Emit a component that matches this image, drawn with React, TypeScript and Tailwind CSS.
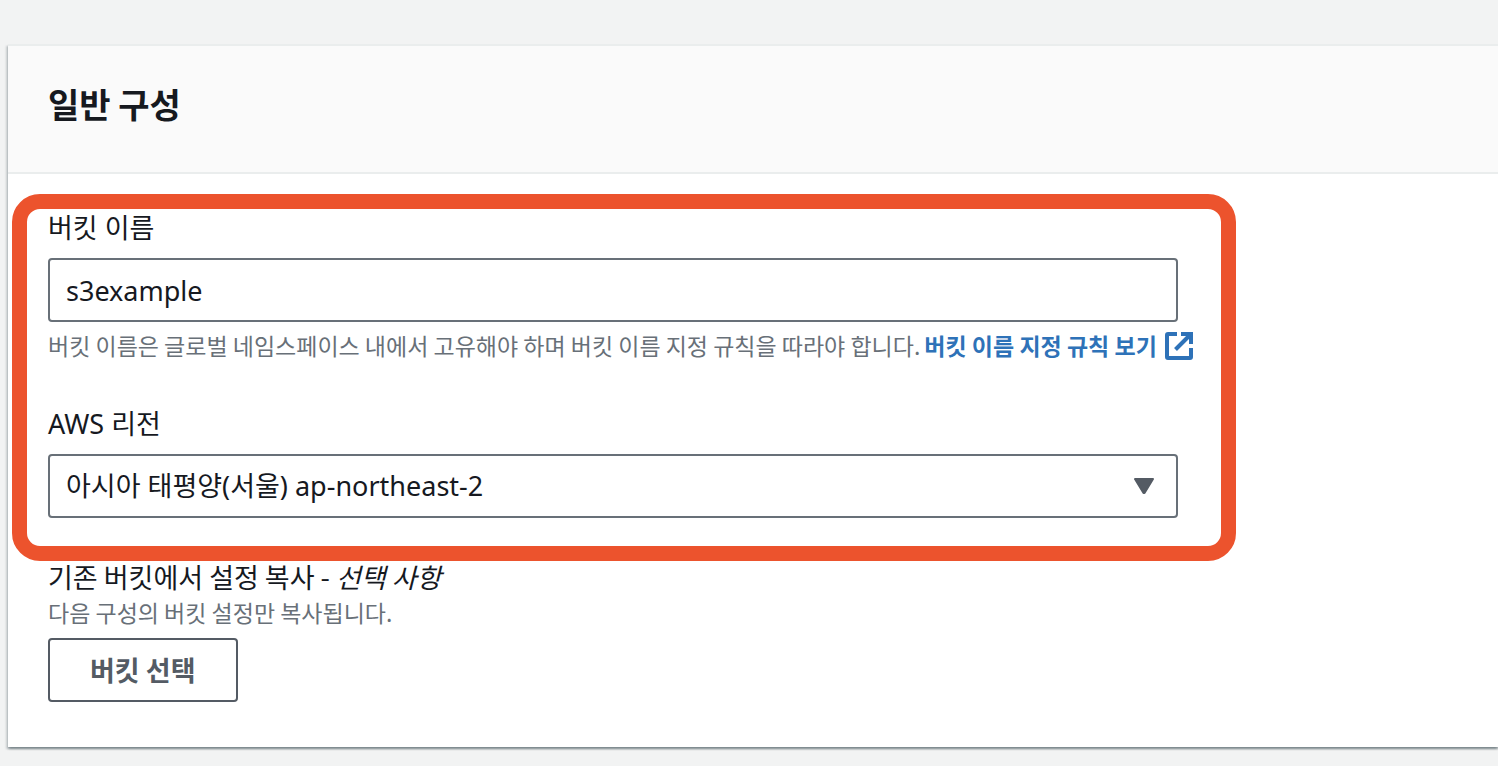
import React, { useState } from "react";

const fieldLabel = "block text-[27px] leading-8 text-[#16191f]";
const fieldHint = "text-[23px] leading-[30px] text-[#687078]";
const fieldBox =
  "block h-16 w-full rounded-[4px] border-2 border-[#687078] bg-white px-4 text-[27px] text-[#16191f] outline-none";

function ExternalIcon() {
  return (
    <svg
      viewBox="0 0 28 28"
      className="mt-[2px] h-7 w-7 shrink-0"
      fill="none"
      stroke="currentColor"
      strokeWidth="4"
      aria-hidden="true"
    >
      <path d="M12 2H3Q2 2 2 3V25Q2 26 3 26H25Q26 26 26 25V16" />
      <path d="M16 2H26V12" />
      <path d="M25 3L10.500 17.500" />
    </svg>
  );
}

function CaretIcon() {
  return (
    <svg
      viewBox="0 0 20 16"
      className="pointer-events-none absolute top-6 right-6 h-4 w-5"
      fill="#545b64"
      stroke="#545b64"
      strokeWidth="2"
      strokeLinejoin="round"
      aria-hidden="true"
    >
      <path d="M1 1H19L10.500 15H9.500Z" />
    </svg>
  );
}

export default function App() {
  const [name, setName] = useState("s3example");

  return (
    <main className="min-h-screen bg-[#f2f3f3] pt-11 pb-5 pl-2 font-['Noto_Sans','Noto_Sans_CJK_KR',sans-serif]">
      <section className="border-t-2 border-[#eaeded] bg-white shadow-[0_2px_2px_0_rgba(0,28,36,0.3),2px_2px_2px_0_rgba(0,28,36,0.15),-2px_2px_2px_0_rgba(0,28,36,0.15)]">
        <header className="border-b-2 border-[#eaeded] bg-[#fafafa] px-10 pt-[38px] pb-12">
          <h2 className="font-['Noto_Sans_CJK_KR',sans-serif] text-[34px] leading-10 font-bold text-[#16191f]">
            일반 구성
          </h2>
        </header>

        <div className="px-1 pt-5 pb-[45px]">
          <div className="max-w-[1224px] rounded-[28px] border-[15px] border-[#ec532d] pt-[3px] pb-7 pl-[21px]">
            <div>
              <label htmlFor="bucket-name" className={fieldLabel}>
                버킷 이름
              </label>
              <div className="mt-[14px] mr-[43px]">
                <input
                  id="bucket-name"
                  type="text"
                  value={name}
                  onChange={(e) => setName(e.target.value)}
                  className={fieldBox}
                />
              </div>
              <div className="mt-2 flex items-start gap-1 font-['Noto_Sans_CJK_KR',sans-serif]">
                <p className={fieldHint}>
                  버킷 이름은 글로벌 네임스페이스 내에서 고유해야 하며 버킷 이름 지정 규칙을 따라야 합니다.
                </p>
                <a
                  href="#naming-rules"
                  className="flex items-start gap-2 text-[23px] leading-[30px] font-bold whitespace-nowrap text-[#2e72b8]"
                >
                  버킷 이름 지정 규칙 보기
                  <ExternalIcon />
                </a>
              </div>
            </div>

            <div className="mt-12">
              <label htmlFor="region" className={fieldLabel}>
                AWS 리전
              </label>
              <div className="relative mt-[14px] mr-[43px]">
                <select id="region" className={`${fieldBox} appearance-none`}>
                  <option>아시아 태평양(서울) ap-northeast-2</option>
                </select>
                <CaretIcon />
              </div>
            </div>
          </div>

          <div className="px-9">
            <h3 className={`${fieldLabel} font-['Noto_Sans_CJK_KR',sans-serif]`}>
              기존 버킷에서 설정 복사 - <em>선택 사항</em>
            </h3>
            <p className={`${fieldHint} mt-1 font-['Noto_Sans_CJK_KR',sans-serif]`}>
              다음 구성의 버킷 설정만 복사됩니다.
            </p>
            <button
              type="button"
              className="mt-[11px] h-16 rounded-[4px] border-2 border-[#545b64] bg-white px-10 font-['Noto_Sans_CJK_KR',sans-serif] text-[27px] font-bold text-[#545b64]"
            >
              버킷 선택
            </button>
          </div>
        </div>
      </section>
    </main>
  );
}
